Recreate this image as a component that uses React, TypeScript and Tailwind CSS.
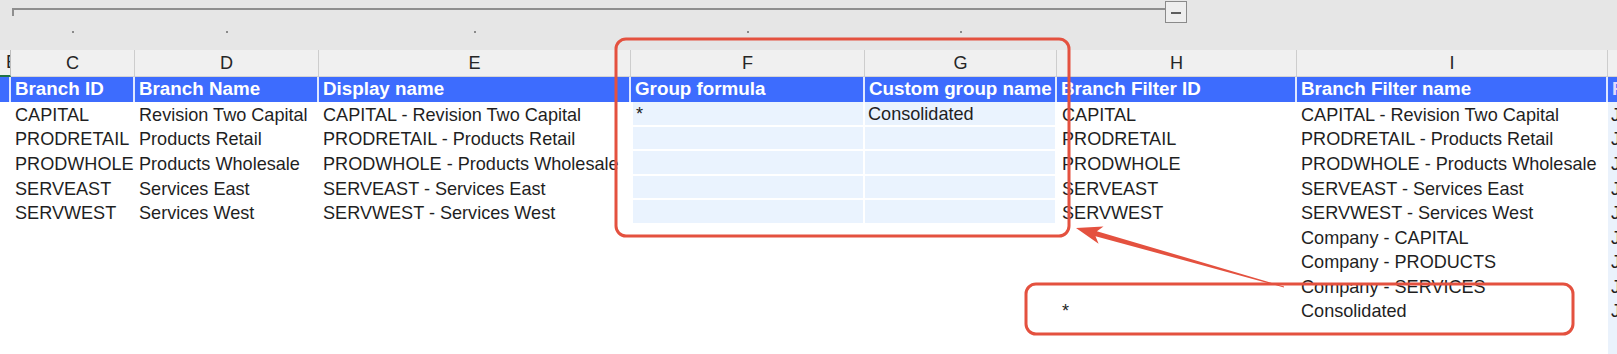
import React from 'react'

const gridCols = 'grid grid-cols-[11px_124px_184px_312px_234px_192px_240px_311px_100px]'

const headers = ['', 'Branch ID', 'Branch Name', 'Display name', 'Group formula', 'Custom group name', 'Branch Filter ID', 'Branch Filter name', 'Region']

const rows: string[][] = [
  ['CAPITAL', 'Revision Two Capital', 'CAPITAL - Revision Two Capital', '*', 'Consolidated', 'CAPITAL', 'CAPITAL - Revision Two Capital', 'J'],
  ['PRODRETAIL', 'Products Retail', 'PRODRETAIL - Products Retail', '', '', 'PRODRETAIL', 'PRODRETAIL - Products Retail', 'J'],
  ['PRODWHOLE', 'Products Wholesale', 'PRODWHOLE - Products Wholesale', '', '', 'PRODWHOLE', 'PRODWHOLE - Products Wholesale', 'J'],
  ['SERVEAST', 'Services East', 'SERVEAST - Services East', '', '', 'SERVEAST', 'SERVEAST - Services East', 'J'],
  ['SERVWEST', 'Services West', 'SERVWEST - Services West', '', '', 'SERVWEST', 'SERVWEST - Services West', 'J'],
  ['', '', '', '', '', '', 'Company - CAPITAL', 'J'],
  ['', '', '', '', '', '', 'Company - PRODUCTS', 'J'],
  ['', '', '', '', '', '', 'Company - SERVICES', 'J'],
  ['', '', '', '', '', '*', 'Consolidated', 'J'],
  ['', '', '', '', '', '', '', ''],
  ['', '', '', '', '', '', '', ''],
]

// tapered callout arrow, tail -> tip
function arrowPoints(tail: [number, number], tip: [number, number]) {
  const dx = tip[0] - tail[0]
  const dy = tip[1] - tail[1]
  const len = Math.hypot(dx, dy)
  const ux = dx / len
  const uy = dy / len
  const nx = -uy
  const ny = ux
  const bx = tip[0] - 26 * ux
  const by = tip[1] - 26 * uy
  const nbx = tip[0] - 21 * ux
  const nby = tip[1] - 21 * uy
  const p = (x: number, y: number) => `${x.toFixed(1)},${y.toFixed(1)}`
  return [
    p(tip[0], tip[1]),
    p(bx + 9 * nx, by + 9 * ny),
    p(nbx + 2.6 * nx, nby + 2.6 * ny),
    p(tail[0] + 0.4 * nx, tail[1] + 0.4 * ny),
    p(tail[0] - 0.4 * nx, tail[1] - 0.4 * ny),
    p(nbx - 2.6 * nx, nby - 2.6 * ny),
    p(bx - 9 * nx, by - 9 * ny),
  ].join(' ')
}

export default function App() {
  return (
    <div className="relative w-[1617px] h-[354px] overflow-hidden bg-white font-['Liberation_Sans',Arial,sans-serif] text-[18.1px] text-[#1f1f1f]">
      {/* outline bar */}
      <div className="h-[50px] bg-[#e6e6e6] flex flex-col">
        <div className="flex items-start h-[24px]">
          <div className="ml-[12px] mt-[8px] w-[1153px] h-[8px] border-t-2 border-l-2 border-[#8e8e8e]" />
          <div className="mt-[1px] w-[22px] h-[22px] border border-[#8a8a8a] bg-[#eeeeee] flex items-center justify-center">
            <div className="w-[10px] h-[2px] mt-[2px] bg-[#5e5e5e]" />
          </div>
        </div>
        <div className={gridCols}>
          {headers.map((_, i) => (
            <div key={i} className="flex justify-center pt-[7px]">
              {i >= 1 && i <= 5 && <div className="w-[2px] h-[2px] bg-[#8a8a8a]" />}
            </div>
          ))}
        </div>
      </div>

      {/* column letters */}
      <div className={`${gridCols} h-[27px] bg-[#f0f0f0] border-b border-[#d4d4d4] text-[#262626]`}>
        <div className="flex items-center justify-end overflow-hidden border-r border-[#bdbdbd] border-b-2 border-b-[#217346]">
          <span className="mr-[-8px]">B</span>
        </div>
        {['C', 'D', 'E', 'F', 'G', 'H', 'I', ''].map((l, i) => (
          <div key={i} className="flex items-center justify-center border-r border-[#cdcdcd]">
            {l}
          </div>
        ))}
      </div>

      {/* table header */}
      <div className={`${gridCols} h-[25px] font-bold text-[18.8px] text-white`}>
        {headers.map((h, i) => (
          <div
            key={i}
            className={`flex items-center pl-[4px] whitespace-nowrap overflow-hidden bg-[#3d6cfe] border-r-2 border-[#dfe7ff] ${i === 8 ? 'text-[#e4d9ff]' : ''}`}
          >
            {h}
          </div>
        ))}
      </div>

      {/* data */}
      {rows.map((r, ri) => (
        <div key={ri} className={`${gridCols} h-[24.6px]`}>
          <div />
          {r.map((c, ci) => {
            const grouped = ri < 5 && (ci === 3 || ci === 4)
            return (
              <div
                key={ci}
                className={`flex items-center pt-[2px] whitespace-nowrap overflow-hidden ${
                  grouped ? 'bg-[#eaf3fe] border-r-2 border-b-2 border-white pl-[3px]' : 'px-[4px]'
                } ${grouped && ci === 3 ? 'border-l-2' : ''} ${ci === 5 ? 'pl-[5px]' : ''} ${
                  ci === 7 ? 'bg-[#eaf2fc] pl-[3px]' : ''
                }`}
              >
                {c}
              </div>
            )
          })}
        </div>
      ))}

      {/* annotations */}
      <svg className="absolute inset-0 pointer-events-none" width="1617" height="354" viewBox="0 0 1617 354">
        <rect x="616" y="39" width="453" height="197" rx="10" fill="none" stroke="#e4513f" strokeWidth="3" />
        <rect x="1026" y="284" width="547" height="50" rx="10" fill="none" stroke="#e4513f" strokeWidth="3" />
        <polygon points={arrowPoints([1284, 287], [1076, 228])} fill="#e4513f" />
      </svg>
    </div>
  )
}
